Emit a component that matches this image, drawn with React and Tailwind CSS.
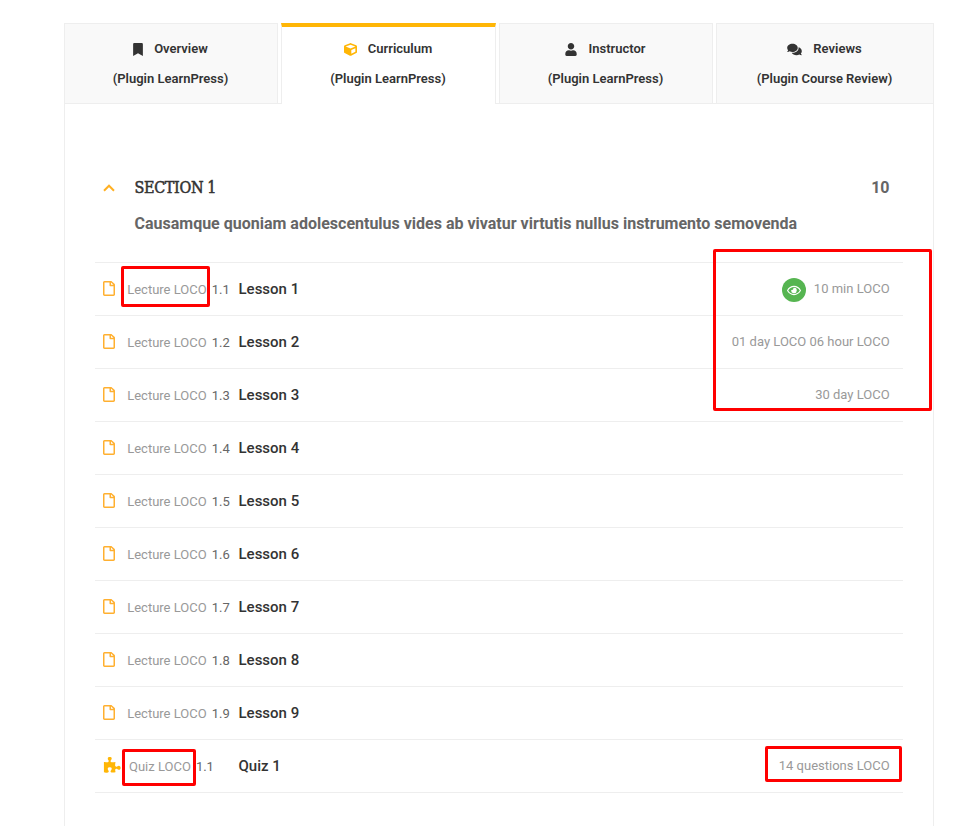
import React from "react";
import { FaBookmark, FaCube, FaUser, FaComments, FaRegFile, FaRegEye } from "react-icons/fa";

const PuzzleIcon = () => (
  <svg viewBox="0 0 1792 1792" className="w-[18px] h-[18px] ml-[7.5px] mt-[0.5px] text-[#ffb606]" fill="currentColor">
    <path d="M1755 1083q0 81-44.5 135t-123.5 54q-41 0-77.5-17.5t-59-38-56.5-38-71-17.5q-110 0-110 124 0 39 16 115t15 115v5q-22 0-33 1-34 3-97.5 11.5t-115.5 13.5-98 5q-61 0-103-26.5t-42-83.5q0-37 17.5-71t38-56.5 38-59 17.5-77.5q0-79-54-123.5t-135-44.5q-84 0-143 45.5t-59 127.5q0 43 15 83t33.5 64.5 33.5 53 15 50.5q0 45-46 89-37 35-117 35-95 0-245-24-9-2-27.5-4t-27.5-4l-13-2q-1 0-3-1-2 0-2-1v-1024q2 1 17.5 3.5t34 5 21.5 3.5q150 24 245 24 80 0 117-35 46-44 46-89 0-22-15-50.5t-33.5-53-33.5-64.5-15-83q0-82 59-127.5t144-45.5q80 0 134 44.5t54 123.5q0 41-17.5 77.5t-38 59-38 56.5-17.5 71q0 57 42 83.5t103 26.5q64 0 180-15t163-17v2q-1 2-3.5 17.5t-5 34-3.5 21.5q-24 150-24 245 0 80 35 117 44 46 89 46 22 0 50.5-15t53-33.5 64.5-33.5 83-15q82 0 127.5 59t45.5 143z" />
  </svg>
);

function Tab({ icon, title, plugin, active, className }) {
  return (
    <div
      className={`${className} h-full flex flex-col items-center pr-px text-[13px] leading-[30px] font-semibold text-[#333] border-[#eee] ${
        active
          ? "bg-white border-x border-t-4 border-t-[#ffb606] pt-[7px]"
          : "bg-[#f9f9f9] border border-b-[#eee] pt-[10px]"
      }`}
    >
      <div className="flex items-center">
        {icon}
        <span>{title}</span>
      </div>
      <div>{plugin}</div>
    </div>
  );
}

function Gap({ className }) {
  return <div className={`${className} h-full border-b border-[#eee]`} />;
}

const meta = ["10 min LOCO", "01 day LOCO 06 hour LOCO", "30 day LOCO"];
const lessons = Array.from({ length: 9 }, (_, i) => ({
  index: `1.${i + 1}`,
  title: `Lesson ${i + 1}`,
  meta: meta[i],
  preview: i === 0,
}));

function Row({ quiz, index, title, meta, preview }) {
  return (
    <li className="flex items-center h-[53px] border-b border-[#eee]">
      <div className="w-8 shrink-0">
        {quiz ? (
          <PuzzleIcon />
        ) : (
          <FaRegFile className="w-3 h-[15px] ml-2 -mt-px text-[#ffb030]" preserveAspectRatio="none" />
        )}
      </div>
      <div className={`shrink-0 flex text-[13px] leading-5 pt-[2px] text-[#999] ${quiz ? "w-[111.5px] pl-[2px]" : "w-[111.5px] pl-[0.2px]"}`}>
        <span>{quiz ? "Quiz LOCO" : "Lecture LOCO"}</span>
        <span className="ml-[5px] text-[#666]">{index}</span>
      </div>
      <div className="text-[15px] leading-5 font-medium text-[#333]">{title}</div>
      <div className="ml-auto mr-[13.4px] flex items-center text-[13px] leading-5 text-[#999]">
        {preview && (
          <span className="w-6 h-6 mr-2 mt-[2px] rounded-full bg-[#56b551] text-white flex items-center justify-center">
            <FaRegEye className="w-[14px] h-[13px]" />
          </span>
        )}
        <span>{meta}</span>
      </div>
    </li>
  );
}

export default function App() {
  return (
    <div className="relative w-[956px] h-[826px] overflow-hidden bg-white pt-[23px] pl-16 font-[Roboto,sans-serif]">
      <div className="w-[870px] h-[803px] flex flex-col">
        <nav className="flex h-[81px] shrink-0">
          <Tab className="w-[214px]" icon={<FaBookmark className="w-[10px] h-[13px] mr-[11px]" />} title="Overview" plugin="(Plugin LearnPress)" />
          <Gap className="w-[3px]" />
          <Tab className="w-[215px]" active icon={<FaCube className="w-[13px] h-[13px] mr-[11px] text-[#ffb606]" />} title="Curriculum" plugin="(Plugin LearnPress)" />
          <Gap className="w-[3px]" />
          <Tab className="w-[214px]" icon={<FaUser className="w-[12px] h-[13px] mr-[11px]" />} title="Instructor" plugin="(Plugin LearnPress)" />
          <Gap className="w-[3px]" />
          <Tab className="w-[218px]" icon={<FaComments className="w-[15px] h-[13px] mr-[11px]" />} title="Reviews" plugin="(Plugin Course Review)" />
        </nav>
        <main className="grow border-x border-[#eee] px-[30px] pt-[69px]">
          <header className="h-[89px]">
            <div className="flex items-center h-[30px]">
              <svg className="ml-2 w-3 h-2" viewBox="0 0 12 8" fill="none" stroke="#ffb023" strokeWidth="2">
                <path d="M1 6.7 6 1.7 11 6.7" />
              </svg>
              <h2 className="ml-[19.5px] w-[82px] whitespace-nowrap text-[16px] leading-[30px] tracking-[-0.35px] font-medium text-[#333] [-webkit-text-stroke:0.5px_#333] font-['Roboto_Slab','DejaVu_Serif_Condensed','DejaVu_Serif',serif]">SECTION 1</h2>
              <span className="ml-auto mr-[13.5px] text-[16px] font-bold text-[#666]">10</span>
            </div>
            <p className="ml-[39.5px] mt-[6px] text-[16px] leading-[30px] font-bold text-[#666]">
              Causamque quoniam adolescentulus vides ab vivatur virtutis nullus instrumento semovenda
            </p>
          </header>
          <ul className="border-t border-[#eee]">
            {lessons.map((l) => (
              <Row key={l.index} {...l} />
            ))}
            <Row quiz index="1.1" title="Quiz 1" meta="14 questions LOCO" />
          </ul>
        </main>
      </div>

      {/* Highlight boxes laid over the list */}
      <div className="absolute left-[121px] top-[266px] w-[89px] h-[41px] border-3 border-[#f00] rounded-[2px]" />
      <div className="absolute left-[713px] top-[249px] w-[219px] h-[162px] border-3 border-[#f00] rounded-[2px]" />
      <div className="absolute left-[122px] top-[749px] w-[74px] h-[37px] border-3 border-[#f00] rounded-[2px]" />
      <div className="absolute left-[765px] top-[746px] w-[137px] h-[36px] border-3 border-[#f00] rounded-[2px]" />
    </div>
  );
}
